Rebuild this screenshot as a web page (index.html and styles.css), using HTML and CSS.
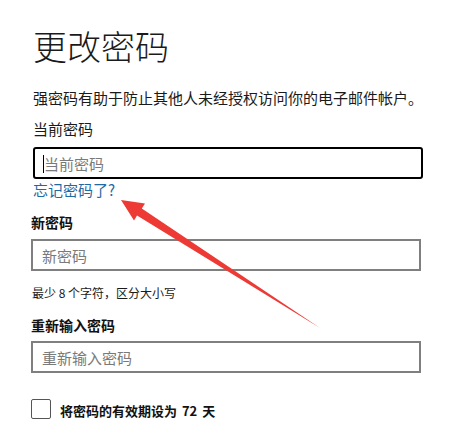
FILE: index.html
```html
<!DOCTYPE html>
<html lang="zh-CN">
<head>
<meta charset="utf-8">
<title>更改密码</title>
<link rel="stylesheet" href="styles.css">
</head>
<body>
<main class="page">
  <h1 class="title">更改密码</h1>
  <p class="desc">强密码有助于防止其他人未经授权访问你的电子邮件帐户。</p>
  <label class="label-plain" for="cur">当前密码</label>
  <div class="field field-focus">
    <input id="cur" class="input" type="password" placeholder="当前密码">
    <span class="caret"></span>
  </div>
  <a class="link" href="#">忘记密码了?</a>
  <label class="label-bold label-new" for="new">新密码</label>
  <div class="field field-plain field-new">
    <input id="new" class="input" type="password" placeholder="新密码">
  </div>
  <p class="hint">最少 8 个字符，区分大小写</p>
  <label class="label-bold label-re" for="re">重新输入密码</label>
  <div class="field field-plain field-re">
    <input id="re" class="input" type="password" placeholder="重新输入密码">
  </div>
  <div class="check-row">
    <span class="checkbox"></span>
    <span class="check-label">将密码的有效期设为 72 天</span>
  </div>
</main>
<svg class="arrow" width="468" height="435" viewBox="0 0 468 435" aria-hidden="true">
  <polygon points="121,200 145,203.4 141.8,208.4 320,328 137,215.4 134,220.5" fill="#ee3a34"/>
</svg>
</body>
</html>
```
FILE: styles.css
```css
html, body {
  margin: 0;
  padding: 0;
  background: #ffffff;
}
body {
  width: 468px;
  height: 435px;
  overflow: hidden;
  position: relative;
  font-family: "Noto Sans CJK SC", "Noto Sans", "Liberation Sans", sans-serif;
  color: #1a1a1a;
}
.page {
  display: flex;
  flex-direction: column;
  align-items: flex-start;
  padding: 26px 0 0 33px;
}
.title {
  margin: 0;
  font-size: 34px;
  line-height: 40px;
  font-weight: 300;
  color: #1a1a1a;
}
.desc {
  margin: 22px 0 0;
  font-size: 15px;
  line-height: 20px;
}
.label-plain {
  margin-top: 11px;
  font-size: 15px;
  line-height: 20px;
}
.field {
  position: relative;
  box-sizing: border-box;
  width: 390px;
  height: 32px;
  display: flex;
}
.field-focus {
  margin-top: 8px;
  border: 2px solid #000000;
  border-radius: 3px;
}
.field-plain {
  border: 2px solid #7f7f7f;
  margin-left: -2px;
}
.field-new { margin-top: 7px; }
.field-re { margin-top: 6px; }
.input {
  flex: 1;
  border: 0;
  outline: none;
  margin: 0;
  padding: 0 0 0 9px;
  background: transparent;
  font-family: inherit;
  font-size: 15px;
  color: #1a1a1a;
}
.input::placeholder {
  color: #7a7a7a;
  opacity: 1;
}
.caret {
  position: absolute;
  left: 8px;
  top: 6px;
  width: 1px;
  height: 18px;
  background: #000000;
}
.link {
  margin-top: 1px;
  font-size: 15px;
  line-height: 20px;
  color: #1f6aa3;
  text-decoration: none;
}
.label-bold {
  font-size: 14px;
  line-height: 20px;
  font-weight: 700;
  color: #111111;
  margin-left: -2px;
}
.label-new { margin-top: 12px; }
.label-re { margin-top: 13px; }
.hint {
  margin: 13px 0 0 -1px;
  font-size: 12px;
  line-height: 18px;
  color: #1a1a1a;
}
.check-row {
  margin: 24px 0 0 -2px;
  display: flex;
  align-items: center;
  gap: 9px;
}
.checkbox {
  box-sizing: border-box;
  width: 20px;
  height: 20px;
  border: 1px solid #555555;
  border-radius: 2px;
}
.check-label {
  font-size: 13px;
  line-height: 20px;
  font-weight: 700;
  color: #111111;
  margin-top: 4px;
  word-spacing: 2px;
}
.arrow {
  position: absolute;
  left: 0;
  top: 0;
  pointer-events: none;
}
```
